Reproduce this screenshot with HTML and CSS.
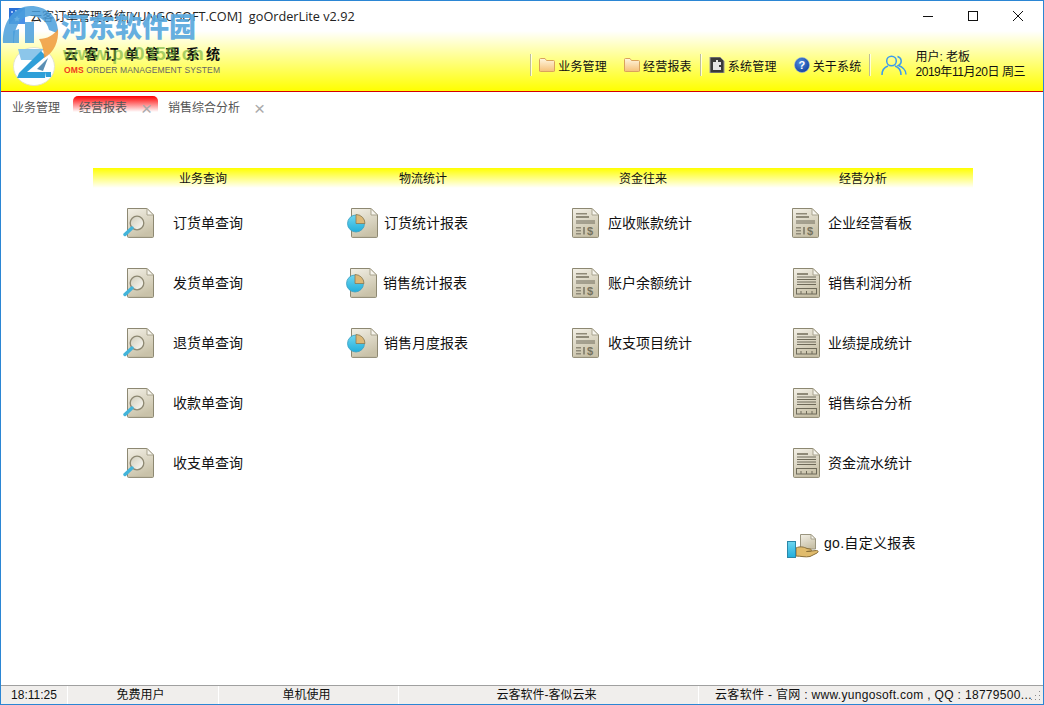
FILE: index.html
```html
<!DOCTYPE html>
<html lang="zh">
<head>
<meta charset="utf-8">
<title>云客订单管理系统</title>
<link rel="stylesheet" href="styles.css">
</head>
<body>
<svg class="defs" aria-hidden="true">
  <defs>
    <linearGradient id="paper" x1="0" y1="0" x2="0.4" y2="1"><stop offset="0" stop-color="#f3f0e6"/><stop offset="1" stop-color="#c9c2a9"/></linearGradient>
    <linearGradient id="lens" x1="0" y1="0" x2="1" y2="1"><stop offset="0" stop-color="#d0ccba"/><stop offset="1" stop-color="#fbfaf6"/></linearGradient>
    <linearGradient id="cyan" x1="0" y1="0" x2="0" y2="1"><stop offset="0" stop-color="#6fd6ef"/><stop offset="1" stop-color="#22aedb"/></linearGradient>
    <linearGradient id="folder" x1="0" y1="0" x2="0" y2="1"><stop offset="0" stop-color="#fff6df"/><stop offset="1" stop-color="#f5c078"/></linearGradient>
    <radialGradient id="help" cx="0.4" cy="0.35" r="0.7"><stop offset="0" stop-color="#4f8fe0"/><stop offset="1" stop-color="#123f9c"/></radialGradient>
    <symbol id="doc" viewBox="0 0 32 30">
      <path d="M4.500.5H24L30.500 7V28.400q0 1-1 1H5.500q-1 0-1-1Z" fill="url(#paper)" stroke="#8d8872"/>
      <path d="M24 .5V7H30.500Z" fill="#f7f5ee" stroke="#a9a48f"/>
    </symbol>
    <symbol id="ic-query" viewBox="0 0 32 30">
      <use href="#doc" width="32" height="30"/>
      <circle cx="14" cy="15" r="6.800" fill="url(#lens)" stroke="#8d8872" stroke-width="1.300"/>
      <path d="M9 20 2 26.500" stroke="#43b4da" stroke-width="3.400" stroke-linecap="round"/>
    </symbol>
    <symbol id="ic-pie" viewBox="0 0 32 30">
      <use href="#doc" width="32" height="30"/>
      <circle cx="9" cy="15.500" r="8.500" fill="url(#cyan)" stroke="#3b9fc2" stroke-width=".8"/>
      <path d="M9 15.500V6.500A9 9 0 0 1 18 15.500Z" fill="#dcb878" stroke="#8d7a50" stroke-width=".8"/>
    </symbol>
    <symbol id="ic-report" viewBox="0 0 32 30">
      <use href="#doc" width="32" height="30"/>
      <path d="M8 5h11v1.500H8zM8 8h13v2H8z" fill="#8f8a78"/>
      <path d="M8 13h19M8 15h19" stroke="#6f6b5a"/>
      <path d="M8 19h5v1.500H8zM8 22h5v1.500H8zM8 25h5v1.500H8zM15 19h2v7.500h-2z" fill="#8f8a78"/>
      <text x="19" y="26.500" class="dollar">$</text>
    </symbol>
    <symbol id="ic-ledger" viewBox="0 0 32 30">
      <use href="#doc" width="32" height="30"/>
      <path d="M8 5h11v2H8z" fill="#8f8a78"/>
      <path d="M8 9h19M8 11.500h19M8 14h19M8 16.500h19" stroke="#6f6b5a"/>
      <rect x="7.500" y="20.500" width="20" height="5.500" fill="none" stroke="#6f6b5a"/>
      <path d="M12 23v3M17.500 23v3M23 23v3" stroke="#6f6b5a"/>
    </symbol>
    <symbol id="ic-hand" viewBox="0 0 32 32">
      <path d="M13.500 7.500H24L28.500 12V22H13.500Z" fill="url(#paper)" stroke="#9a957f"/>
      <path d="M24 7.500V12H28.500Z" fill="#f7f5ee" stroke="#a9a48f"/>
      <path d="M9 21c4-2 8-1 11 .5l3 .5c2 .5 2 2 .5 2.300l-4 .2 10-1c2 0 2 1.500 .5 2.500l-7 3.500c-5 1-9-.5-14-.5Z" fill="#e0bb6c" stroke="#8a6f38"/>
      <rect x=".5" y="14.500" width="8" height="16" fill="url(#cyan)" stroke="#2b87a8"/>
    </symbol>
  </defs>
</svg>

<div class="window">
  <header class="header">
    <div class="titlebar">
      <svg class="app-icon" viewBox="0 0 16 16"><rect width="16" height="16" fill="#2a6fd6"/><path d="M0 16 16 0v16Z" fill="#4a90e8"/><path d="m8 8 1 2 2 .2-1.500 1.300.5 2L8 12.500 6 13.500l.5-2L5 10.200 7 10Z" fill="#fff"/><circle cx="3" cy="4" r="1" fill="#cfe4ff"/><circle cx="7" cy="3" r="1" fill="#cfe4ff"/></svg>
      <span class="app-title">云客订单管理系统<span class="app-title-latin">[YUNGOSOFT.COM]&nbsp;&nbsp;goOrderLite v2.92</span></span>
      <div class="win-controls">
        <svg class="win-btn" viewBox="0 0 10 10"><path d="M0 5.500H10" stroke="#111"/></svg>
        <svg class="win-btn" viewBox="0 0 10 10"><rect x=".5" y=".5" width="9" height="9" fill="none" stroke="#111"/></svg>
        <svg class="win-btn" viewBox="0 0 10 10"><path d="M0 0 10 10M10 0 0 10" stroke="#111"/></svg>
      </div>
    </div>
    <div class="banner">
      <div class="brand">
        <svg class="logo" viewBox="0 0 42 39" preserveAspectRatio="none">
          <ellipse cx="21" cy="19.500" rx="20.500" ry="19" fill="#fff" stroke="#e4e4c8"/>
          <path d="M5 2H31L20 13H8Z" fill="#8cc6ea"/>
          <path d="M28 4 33 9 14 25H33L32 31H4L6 26Z" fill="#2f9fd8"/>
          <path d="M24 22 35 11 30 24Z" fill="#5a8fb4"/>
          <rect x="33" y="25" width="5" height="5" fill="#2f9fd8"/>
        </svg>
        <div class="brand-text">
          <div class="brand-cn">云客订单管理系统</div>
          <div class="brand-en"><b>OMS</b> ORDER MANAGEMENT SYSTEM</div>
        </div>
      </div>
      <nav class="nav">
        <div class="nav-group">
          <span class="nav-item"><svg class="nav-icon" viewBox="0 0 16 14"><path d="M.5 13V1.500q0-1 1-1H6l1.500 2h7q1 0 1 1V13q0 .5-1 .5H1.500q-1 0-1-.5Z" fill="url(#folder)" stroke="#d9a25c"/></svg>业务管理</span>
          <span class="nav-item"><svg class="nav-icon" viewBox="0 0 16 14"><path d="M.5 13V1.500q0-1 1-1H6l1.500 2h7q1 0 1 1V13q0 .5-1 .5H1.500q-1 0-1-.5Z" fill="url(#folder)" stroke="#d9a25c"/></svg>经营报表</span>
        </div>
        <div class="nav-group">
          <span class="nav-item"><svg class="nav-icon tall" viewBox="0 0 16 16"><path d="M1 0H11L15 4V16H1Z" fill="#3a3a3a" stroke="#9a9a9a"/><path d="M4 5h3V3h2v2h3v3h-2v2h2v3H4Z" fill="#e4e4e4"/></svg>系统管理</span>
          <span class="nav-item"><svg class="nav-icon tall" viewBox="0 0 16 16"><circle cx="8" cy="8" r="7.500" fill="url(#help)" stroke="#9ab6e0" stroke-width=".6"/><text x="8" y="12" class="help-mark">?</text></svg>关于系统</span>
        </div>
        <div class="nav-group user">
          <svg class="user-icon" viewBox="0 0 26 20"><g fill="none" stroke="#3d9bee" stroke-width="1.500"><circle cx="10.500" cy="6" r="4.800"/><path d="M1 20c0-5 3-8 6-9M14 11c3 1 6 4 6 9"/><path d="M16.500 1.500a4.800 4.800 0 0 1 1 9c3 1 7.500 4 7.500 9"/></g></svg>
          <div class="user-text">
            <div>用户: 老板</div>
            <div class="user-date">2019年11月20日 周三</div>
          </div>
        </div>
      </nav>
    </div>
  </header>

  <div class="tabs">
    <span class="tab">业务管理</span>
    <span class="tab active">经营报表<i class="close">×</i></span>
    <span class="tab">销售综合分析<i class="close">×</i></span>
  </div>

  <main class="board">
    <section class="col">
      <h2 class="col-head">业务查询</h2>
      <a class="item query"><svg class="icon"><use href="#ic-query"/></svg>订货单查询</a>
      <a class="item query"><svg class="icon"><use href="#ic-query"/></svg>发货单查询</a>
      <a class="item query"><svg class="icon"><use href="#ic-query"/></svg>退货单查询</a>
      <a class="item query"><svg class="icon"><use href="#ic-query"/></svg>收款单查询</a>
      <a class="item query"><svg class="icon"><use href="#ic-query"/></svg>收支单查询</a>
    </section>
    <section class="col">
      <h2 class="col-head">物流统计</h2>
      <a class="item pie"><svg class="icon"><use href="#ic-pie"/></svg>订货统计报表</a>
      <a class="item pie shifted"><svg class="icon"><use href="#ic-pie"/></svg>销售统计报表</a>
      <a class="item pie"><svg class="icon"><use href="#ic-pie"/></svg>销售月度报表</a>
    </section>
    <section class="col">
      <h2 class="col-head">资金往来</h2>
      <a class="item report"><svg class="icon"><use href="#ic-report"/></svg>应收账款统计</a>
      <a class="item report"><svg class="icon"><use href="#ic-report"/></svg>账户余额统计</a>
      <a class="item report"><svg class="icon"><use href="#ic-report"/></svg>收支项目统计</a>
    </section>
    <section class="col">
      <h2 class="col-head">经营分析</h2>
      <a class="item report"><svg class="icon"><use href="#ic-report"/></svg>企业经营看板</a>
      <a class="item ledger"><svg class="icon"><use href="#ic-ledger"/></svg>销售利润分析</a>
      <a class="item ledger"><svg class="icon"><use href="#ic-ledger"/></svg>业绩提成统计</a>
      <a class="item ledger"><svg class="icon"><use href="#ic-ledger"/></svg>销售综合分析</a>
      <a class="item ledger"><svg class="icon"><use href="#ic-ledger"/></svg>资金流水统计</a>
      <a class="item custom"><svg class="icon"><use href="#ic-hand"/></svg>go.自定义报表</a>
    </section>
  </main>

  <footer class="status">
    <span class="cell c1">18:11:25</span>
    <span class="cell c2">免费用户</span>
    <span class="cell c3">单机使用</span>
    <span class="cell c4">云客软件-客似云来</span>
    <span class="cell c5">云客软件 - 官网 : www.yungosoft.com , QQ : 18779500...</span>
    <svg class="grip" viewBox="0 0 10 12"><path d="M8 2h1v1H8zM8 6h1v1H8zM8 10h1v1H8zM4 6h1v1H4zM4 10h1v1H4zM0 10h1v1H0z" fill="#8a8a8a"/></svg>
  </footer>

  <div class="watermark">
    <svg class="wm-mark" viewBox="0 0 60 60">
      <path d="M2 42C1 22 12 5 30 5c14 0 26 9 27 24l-1 3-8-3c-2-9-9-14-18-14-10 0-17 10-17 27Z" fill="#4a9fdc" fill-opacity=".85"/>
      <path d="M24 21h9V42H24ZM12 30l6-2V42H12Z" fill="#4a9fdc" fill-opacity=".85"/>
      <path d="M38 38c8 0 15-4 19-10 1 12-4 24-14 29 0-7-2-14-5-19Z" fill="#ee9a3c" fill-opacity=".85"/>
    </svg>
    <span class="wm-title">河东软件园</span>
    <span class="wm-url">www.pc0359.cn</span>
  </div>
</div>
</body>
</html>
```
FILE: styles.css
```css
* { box-sizing: border-box; }
html, body { margin: 0; height: 100%; overflow: hidden; background: #fff; }
body { font-family: "Liberation Sans", "Noto Sans CJK SC", sans-serif; font-size: 12px; color: #111; }
.defs { position: absolute; width: 0; height: 0; }
.dollar { font: 700 11px "Liberation Sans", sans-serif; fill: #77735f; }
.help-mark { font: 700 11px "Liberation Sans", sans-serif; fill: #fff; text-anchor: middle; }

.window { position: relative; width: 1044px; height: 705px; border: 1px solid #2b86d4; display: flex; flex-direction: column; }

.header { height: 91px; flex: none; border-bottom: 1px solid #d40000; background: linear-gradient(#fff 0, #fff 30px, #ffff00 100%); display: flex; flex-direction: column; }
.titlebar { height: 30px; display: flex; align-items: center; padding-left: 8px; }
.app-icon { width: 16px; height: 16px; }
.app-title { margin-left: 5px; font-family: "Open Sans", "Noto Sans CJK SC", sans-serif; font-size: 12px; color: #222; white-space: nowrap; }
.app-title-latin { font-size: 12.700px; }
.win-controls { margin-left: auto; display: flex; gap: 35px; padding-right: 20px; }
.win-btn { width: 10px; height: 10px; }

.banner { flex: 1; display: flex; justify-content: space-between; }
.brand { display: flex; padding-left: 12px; }
.logo { width: 42px; height: 39px; margin-top: 16px; }
.brand-text { margin-left: 9px; padding-top: 14px; }
.brand-cn { font-size: 14px; line-height: 18px; font-weight: 700; letter-spacing: 6.300px; color: #111; }
.brand-en { margin-top: 1px; font-size: 8.500px; line-height: 12px; letter-spacing: .12px; color: #666; white-space: nowrap; }
.brand-en b { color: #ef3b1e; }

.nav { display: flex; align-items: flex-start; padding-top: 23px; padding-right: 18px; }
.nav-group { display: flex; height: 22px; align-items: center; border-left: 1px solid #bdbd9a; box-shadow: 1px 0 0 rgba(255,255,255,.7) inset; padding-left: 8px; gap: 17px; padding-right: 8px; }
.nav-item { display: flex; align-items: center; gap: 3px; white-space: nowrap; letter-spacing: .2px; }
.nav-icon { width: 16px; height: 14px; }
.nav-icon.tall { height: 16px; }
.user { padding-left: 11px; padding-right: 0; gap: 8px; }
.user-icon { width: 26px; height: 20px; }
.user-text { line-height: 15px; white-space: nowrap; }
.user-date { letter-spacing: -.45px; }

.tabs { height: 30px; flex: none; display: flex; align-items: flex-start; padding: 4px 0 0 11px; color: #555; }
.tab { height: 16px; line-height: 25px; margin-right: 13px; white-space: nowrap; display: flex; }
.tab.active { width: 85px; margin-right: 10px; padding-left: 6px; border-radius: 5px 5px 0 0; background: linear-gradient(#ff0000, #fff); }
.close { font-style: normal; font-size: 19px; font-weight: 400; color: #aaa; margin-left: 14px; }

.board { flex: 1; display: grid; grid-template-columns: repeat(4, 220px); padding: 46px 0 0 92px; align-content: start; }
.col { display: flex; flex-direction: column; }
.col-head { margin: 0 0 5px; height: 20px; line-height: 22px; font-size: 12px; font-weight: 400; text-align: center; color: #111; background: linear-gradient(#ffff00, #fff); }
.item { height: 60px; padding-bottom: 2px; display: flex; align-items: center; font-size: 14px; white-space: nowrap; color: #111; }
.icon { width: 32px; height: 30px; flex: none; margin-top: 2px; }
.query { padding-left: 30px; gap: 18px; }
.pie { padding-left: 34px; gap: 5px; }
.pie.shifted { padding-left: 33px; }
.report { padding-left: 35px; gap: 8px; }
.ledger { padding-left: 36px; gap: 7px; }
.custom { padding-left: 34px; gap: 5px; margin-top: 20px; letter-spacing: .3px; }
.custom .icon { height: 32px; }

.status { height: 19px; flex: none; display: flex; align-items: center; position: relative; border-top: 1px solid #a0a0a0; background: #f0eeec; font-size: 12px; color: #111; }
.cell { height: 100%; line-height: 18px; border-right: 1px solid #fff; text-align: center; white-space: nowrap; overflow: hidden; }
.c1 { width: 67px; }
.c2 { width: 151px; padding-right: 5px; }
.c3 { width: 180px; padding-right: 4px; }
.c4 { width: 300px; padding-right: 4px; }
.c5 { flex: 1; border-right: 0; text-align: left; padding-left: 16px; letter-spacing: .32px; }
.grip { width: 10px; height: 12px; flex: none; margin-right: 2px; }

.watermark { position: absolute; left: 0; top: 0; width: 230px; height: 90px; pointer-events: none; }
.wm-mark { position: absolute; left: 0; top: 0; width: 60px; height: 60px; }
.wm-title { position: absolute; left: 60px; top: 8px; font-family: "Noto Sans CJK SC", sans-serif; font-size: 27px; line-height: 34px; font-weight: 900; color: #5aa9de; opacity: .92; }
.wm-url { position: absolute; left: 62px; top: 44px; font: 700 19px/18px "Liberation Sans", sans-serif; color: #6fae3a; opacity: .6; }
```
